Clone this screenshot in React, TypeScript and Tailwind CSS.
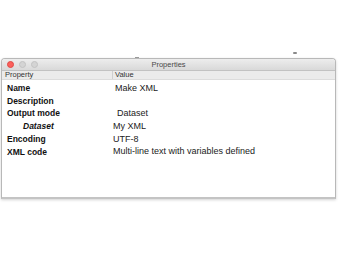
import React from "react";

type Row = {
  label: string;
  value?: string;
  indent?: boolean;
  valueOffset?: string;
};

const rows: Row[] = [
  { label: "Name", value: "Make XML", valueOffset: "pl-[2px]" },
  { label: "Description" },
  { label: "Output mode", value: "Dataset", valueOffset: "pl-[4px]" },
  { label: "Dataset", value: "My XML", indent: true },
  { label: "Encoding", value: "UTF-8" },
  { label: "XML code", value: "Multi-line text with variables defined" },
];

const App = () => {
  return (
    <div
      className="relative w-[340px] h-[260px] bg-white overflow-hidden pt-[58px] pl-[1px]"
      style={{ fontFamily: '"Liberation Sans", Arial, sans-serif' }}
    >
      {/* bits of stuff behind the window */}
      <div className="absolute left-[135px] top-[57px] w-[4px] h-[1px] bg-[#9a9a9a]" />
      <div className="absolute left-[293px] top-[52px] w-[4px] h-[2px] rounded-full bg-[#8a8a8a]" />

      <div className="w-[335px] h-[141px] flex flex-col rounded-t-[4px] border border-[#b8b8b8] border-b-[2px] border-b-[#c4c4c4] bg-white shadow-[0_1px_3px_rgba(0,0,0,0.18)] overflow-hidden">
        {/* title bar */}
        <div className="relative h-[12px] flex items-center bg-gradient-to-b from-[#ededed] to-[#d9d9d9] border-b border-[#c2c2c2]">
          <div className="flex items-center gap-[5px] pl-[5px]">
            <span className="w-[7px] h-[7px] rounded-full bg-[#fc605c] border border-[#de4a45]" />
            <span className="w-[7px] h-[7px] rounded-full bg-[#d4d4d4] border border-[#c2c2c2]" />
            <span className="w-[7px] h-[7px] rounded-full bg-[#d4d4d4] border border-[#c2c2c2]" />
          </div>
          <span className="absolute inset-0 flex items-center justify-center text-[7.5px] text-[#4a4a4a] leading-none">
            Properties
          </span>
        </div>

        {/* column header */}
        <div className="h-[9px] flex bg-[#ebebeb] border-b border-[#dcdcdc] text-[7.5px] text-[#333] leading-none">
          <div className="w-[111px] pl-[3px] flex items-center border-r border-[#cfcfcf]">
            Property
          </div>
          <div className="flex-1 pl-[2px] flex items-center">Value</div>
        </div>

        {/* property rows */}
        <div className="flex flex-col pt-[2px]">
          {rows.map((r) => (
            <div key={r.label} className="h-[12.7px] flex items-center leading-none">
              <div
                className={`w-[111px] font-bold text-[8.5px] text-[#111] ${
                  r.indent ? "pl-[21px] italic" : "pl-[5px]"
                }`}
              >
                {r.label}
              </div>
              <div className={`flex-1 text-[9px] text-[#222] ${r.valueOffset ?? ""}`}>
                {r.value ?? ""}
              </div>
            </div>
          ))}
        </div>
      </div>
    </div>
  );
};

export default App;
